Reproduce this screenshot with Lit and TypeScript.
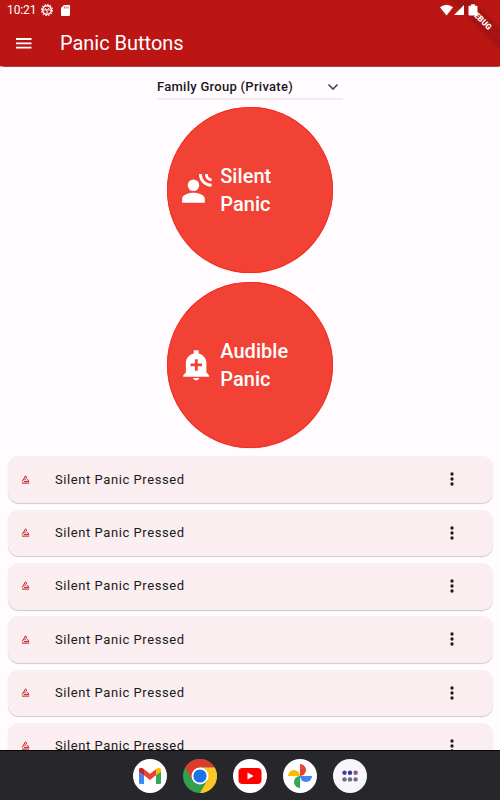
import { LitElement, html, css, svg } from "lit";
import { customElement, property } from "lit/decorators.js";

@customElement("panic-button")
class PanicButton extends LitElement {
  @property() first = "";
  @property() icon = "";
  static styles = css`
    :host { display: block; }
    .circle { width: 166.6px; height: 166.6px; border-radius: 50%; background: #f24135; box-shadow: inset 0 0 0 0.8px #f62a18, 0 0.6px 1px rgba(0,0,0,.12);
      box-sizing: border-box; display: flex; align-items: center; padding: 0 0 0 13.5px; color: #fff; border: none; font: 500 20px/28px Roboto, sans-serif; text-align: left; letter-spacing: .05px; }
    svg { width: 32px; height: 32px; fill: #fff; margin-right: 8px; flex: none; display: block; }
    .label { display: block; }
  `;
  render() {
    return html`<button class="circle">
      <svg viewBox="0 0 24 24">${this.icon === "voice"
        ? svg`<circle cx="10.1" cy="8.5" r="4.3"/><path d="M10.1 14c-3 0-8.5 1.5-8.5 4.3v3.2h17v-3.2c0-2.8-5.5-4.3-8.5-4.3z"/><path fill="none" stroke="#fff" stroke-width="2.1" d="M15.3 0c0 4.8 3.4 8.4 8.4 8.4M19.8 0c0 2.7 1.6 4.3 3.9 4.3"/>`
        : svg`<path fill-rule="evenodd" d="M9.9 21.7c.3 1.1 1.2 1.8 2.3 1.8s1.9-.7 2.2-1.8zM19.8 17.7V10.6c0-3.6-2.5-6.4-5.8-7.2V1h-3.7v2.4c-3.4.8-5.9 3.7-5.9 7.2v7.1l-2 1.9v1.3h19.4v-1.3zM16.5 13h-3.2v3.3h-2.1V13H7.9v-2.1h3.3V7.6h2.1v3.3h3.2z"/>`}</svg>
      <span class="label">${this.first}<br>Panic</span></button>`;
  }
}

@customElement("app-root")
class AppRoot extends LitElement {
  static styles = css`
    :host { display: block; width: 500px; height: 800px; overflow: hidden; font-family: Roboto, sans-serif; background: #fffbff; color: #201a1a; position: relative; }
    .screen { height: 800px; display: flex; flex-direction: column; }
    header { height: 66px; flex: none; background: #bb1614; color: #fff; box-shadow: 0 .5px 1px rgba(120,0,0,.7); }
    .status { height: 20px; display: flex; align-items: center; padding-left: 7px; font-size: 12px; }
    .status span { width: 34px; letter-spacing: -.1px; }
    .status svg { display: block; }
    .gear { width: 12px; height: 12px; }
    .sd { width: 9px; height: 11px; margin-left: 8px; }
    .bar { height: 46px; display: flex; align-items: center; padding-left: 15.5px; }
    .bar svg { width: 16px; height: 12px; display: block; margin-right: 28.5px; }
    h1 { font-weight: 400; font-size: 20px; line-height: 24px; margin: 0; letter-spacing: -.02px; }
    .signals { position: absolute; z-index: 2; left: 440px; top: 4px; width: 40px; height: 12px; fill: #fff; }
    .corner { position: absolute; top: 0; right: 0; width: 66px; height: 66px; overflow: hidden; }
    .ribbon { position: absolute; left: -3.5px; top: 14px; width: 100px; height: 11px; background: #a61313; box-shadow: 0 0 5px rgba(0,0,0,.28); color: #fff; transform: rotate(45deg); text-align: center; font: 900 8px/11px Roboto, sans-serif; }
    main { flex: 1; min-height: 0; overflow: hidden; display: flex; flex-direction: column; align-items: center; }
    .select { width: 186px; height: 34.4px; margin-bottom: 6.4px; box-sizing: border-box; border-bottom: 2px solid #efecef; display: flex; align-items: center; justify-content: space-between; padding: 8px 4px 0 0; font-size: 13px; font-weight: 500; letter-spacing: .28px; color: #1a1819; flex: none; }
    .select svg { width: 12px; height: 8px; display: block; margin-top: 1px; }
    panic-button { margin-bottom: 8.2px; flex: none; }
    .list { width: 485px; display: flex; flex-direction: column; gap: 6.63px; }
    .card { height: 46.7px; flex: none; box-sizing: border-box; background: #faeef1; border-radius: 11px; box-shadow: 0 1px 1px rgba(0,0,0,.2); display: flex; align-items: center; padding: 0 38.5px .8px 13.5px; font-size: 13px; letter-spacing: .57px; }
    .alert { width: 9px; height: 9px; margin-right: 25px; }
    .card span { flex: 1; }
    .dots { width: 4px; height: 14px; fill: #201a1a; }
    nav { flex: none; height: 50px; box-sizing: border-box; border-top: 1px solid #060607; background: #26262b; display: flex; justify-content: center; align-items: center; gap: 16px; }
    .app { width: 34px; height: 34px; display: block; }
  `;
  render() {
    return html`<div class="screen">
      <header>
        <div class="status"><span>10:21</span>
          <svg class="gear" viewBox="0 0 12 12" fill="none" stroke="#fff"><circle cx="6" cy="6" r="4.3" stroke-width="1.5"/><circle cx="6" cy="6" r="5.4" stroke-width="1.1" stroke-dasharray="1.6 1.17"/><path d="M2.5 5.9h7M6 6v3.5M4 4l1 1.5M8 4 7 5.5"/></svg>
          <svg class="sd" viewBox="0 0 9 11"><path fill="#fff" d="M3 0h5a1 1 0 0 1 1 1v9a1 1 0 0 1-1 1H1a1 1 0 0 1-1-1V3z"/><path stroke="#bb1614" stroke-width=".7" d="M3.4 1.5V3.5M5.2 1.5V3.5M7 1.5V3.5"/></svg>
        </div>
        <div class="bar"><svg viewBox="0 0 16 12"><path stroke="#fff" stroke-width="1.8" d="M0 2h15.5M0 6.3h15.5M0 10.7h15.5"/></svg><h1>Panic Buttons</h1></div>
      </header>
      <main>
        <div class="select">Family Group (Private)<svg viewBox="0 0 12 8"><path fill="none" stroke="#47474a" stroke-width="1.6" d="m1.5 1.5 4.5 4.5 4.5-4.5"/></svg></div>
        <panic-button first="Silent" icon="voice"></panic-button>
        <panic-button first="Audible" icon="bell"></panic-button>
        <div class="list">${[0, 1, 2, 3, 4, 5].map(() => html`<div class="card">
          <svg class="alert" viewBox="0 0 9 9" fill="none" stroke="#c5161d"><path stroke-width="1" d="M1 8.1h7.2M1.2 6.4 4.6.8l1.2 2.1M2.8 6.4h5L6.5 4.2M3.5 4.5l1.9-.8"/></svg>
          <span>Silent Panic Pressed</span>
          <svg class="dots" viewBox="0 0 4 14"><circle cx="2" cy="2" r="1.65"/><circle cx="2" cy="7" r="1.65"/><circle cx="2" cy="12" r="1.65"/></svg></div>`)}</div>
      </main>
      <nav>
        <svg class="app" viewBox="0 0 34 34"><circle cx="17" cy="17" r="17" fill="#fff"/><path fill="#4285f4" d="M6 12v11.5q0 1.5 1.5 1.5H11v-9z"/><path fill="#34a853" d="M28 12v11.5q0 1.5-1.5 1.5H23v-9z"/><path fill="#ea4335" d="M11 10.2l6 4.6 6-4.6v6.1l-6 4.6-6-4.6z"/><path fill="#c5221f" d="M6 11c0-2.5 2.5-3 4-1.6l1 .8v6.1l-5-3.8z"/><path fill="#fbbc04" d="M28 11c0-2.5-2.5-3-4-1.6l-1 .8v6.1l5-3.8z"/></svg>
        <svg class="app" viewBox="0 0 34 34"><circle cx="17" cy="17" r="17" fill="#34a04f"/><path fill="#dc3b2d" d="M2.3 8.5A17 17 0 0 1 31.7 8.5H17L9.6 21.2z"/><path fill="#fcc624" d="M31.7 8.5A17 17 0 0 1 17 34l7.4-12.8L17 8.5z"/><circle cx="17" cy="17" r="8.5" fill="#fff"/><circle cx="17" cy="17" r="6.6" fill="#1a73e8"/></svg>
        <svg class="app" viewBox="0 0 34 34"><circle cx="17" cy="17" r="17" fill="#fff"/><rect x="5.5" y="9" width="23" height="16" rx="4" fill="#f00"/><path fill="#fff" d="m14.5 13.6 6.2 3.4-6.2 3.4z"/></svg>
        <svg class="app" viewBox="0 0 34 34"><circle cx="17" cy="17" r="17" fill="#fff"/><path fill="#ea4335" d="M17 5a6 6 0 0 1 0 12z"/><path fill="#4285f4" d="M29 17a6 6 0 0 1-12 0z"/><path fill="#34a853" d="M17 29a6 6 0 0 1 0-12z"/><path fill="#fbbc04" d="M5 17a6 6 0 0 1 12 0z"/></svg>
        <svg class="app" viewBox="0 0 34 34"><circle cx="17" cy="17" r="17" fill="#faf5fd"/><g fill="#6a6c7c"><circle cx="11.5" cy="13.8" r="2.2" fill="#3f4595"/><circle cx="17" cy="13.8" r="2.2" fill="#3538a0"/><circle cx="22.6" cy="13.8" r="2.2" fill="#86587f"/><circle cx="11.5" cy="20.4" r="2.2"/><circle cx="17" cy="20.4" r="2.2"/><circle cx="22.6" cy="20.4" r="2.2"/></g></svg>
      </nav>
    </div>
    <div class="corner"><div class="ribbon">DEBUG</div></div>
    <svg class="signals" viewBox="0 0 40 12"><path d="M0 3.2Q6.5-1.8 13 3.2L6.5 11.4z"/><path d="M24 1v10H14z"/><path d="M29.3 1.8h1.8V.3h3.8v1.5h1.8c.5 0 .8.3.8.8v8.2c0 .5-.3.8-.8.8h-7.4c-.5 0-.8-.3-.8-.8V2.6c0-.5.3-.8.8-.8z"/></svg>`;
  }
}
